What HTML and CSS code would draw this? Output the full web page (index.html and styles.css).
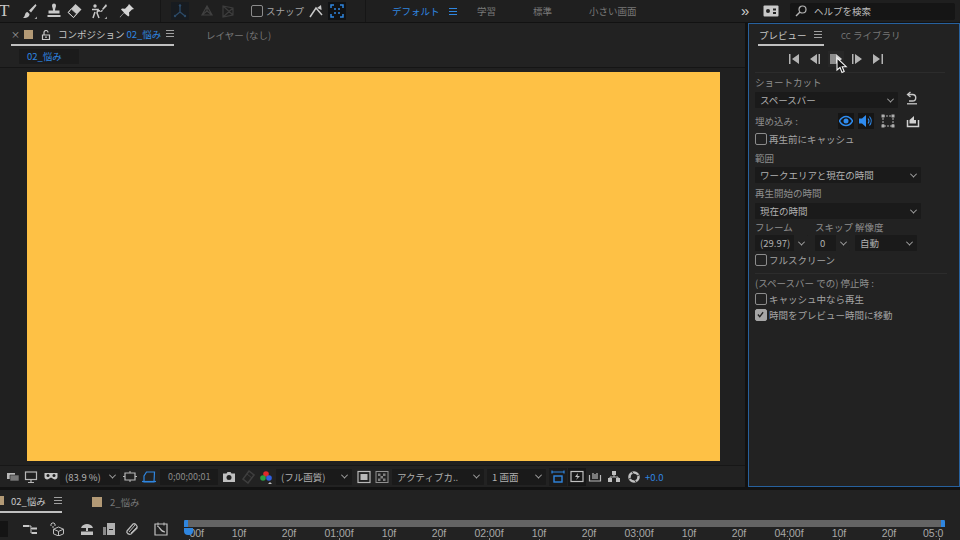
FILE: index.html
```html
<!DOCTYPE html>
<html lang="ja">
<head>
<meta charset="utf-8">
<title>After Effects プレビュー</title>
<link rel="stylesheet" href="styles.css">
</head>
<body>
<div class="app">
  <header class="toolbar">
    <div class="tbgroup tools">
      <span class="t-glyph">T</span>
      <svg class="ic ml12" viewBox="0 0 16 16"><path d="M14.500 1 8 7.500 10 9.500 15.500 2.500zM2 15c3.500.3 6.500-1 6.500-4L6.500 9C3.500 9 4.500 13.500 2 15z" fill="#c8c8c8"/><path d="M16 16h-2.500l2.500-2.500z" fill="#a0a0a0"/></svg>
      <svg class="ic ml9" viewBox="0 0 16 16"><path d="M6 2.500a2 2 0 1 1 4 0c0 2-1 2.500-1 5h4.500v3H2.500v-3H7c0-2.500-1-3-1-5zM1.500 12h13v2h-13z" fill="#c8c8c8"/></svg>
      <svg class="ic ml4" viewBox="0 0 16 16"><path d="M9.500 1 15.500 6.500 7.500 15 1.500 9.500z" fill="#c8c8c8"/><path d="m5.200 5.800 5.500 5L7.500 14.500 2.500 9.500z" fill="#222" stroke="#c8c8c8"/></svg>
      <svg class="ic ml9" viewBox="0 0 16 16"><circle cx="4" cy="3" r="1.700" fill="#c8c8c8"/><path d="M1 6.500h6L6 10l2 5M4 9l-2 6M6 7l3 1" fill="none" stroke="#c8c8c8" stroke-width="1.500"/><path d="m15 1-4 5 1 1 4-4zM11 7c-1 0-1.500 1-2 2 1 0 2.500 0 3-1.500z" fill="#c8c8c8"/><path d="M16 16h-2.500l2.500-2.500z" fill="#a0a0a0"/></svg>
      <svg class="ic ml12" viewBox="0 0 16 16"><path d="m10 1 5 5-2 .5-3 3 .3 3-1 1L5 10l-4 4.500L.8 14 5 9.500 2 6.500l1-1 3 .3 3-3z" fill="#d4d4d4"/></svg>
    </div>
    <div class="tbgroup axes">
      <span class="axis-box"><svg class="ic" viewBox="0 0 16 16"><path d="M8 2v7l-5 4M8 9l5 4" fill="none" stroke="#2c4a68" stroke-width="1.300"/><circle cx="8" cy="2.500" r="1.200" fill="#2c4a68"/><circle cx="3" cy="13" r="1.200" fill="#2c4a68"/><circle cx="13" cy="13" r="1.200" fill="#2c4a68"/></svg></span>
      <svg class="ic ml10" viewBox="0 0 16 16"><path d="M8 3 3 12h10zM8 3v5l-5 4M8 8l5 4" fill="none" stroke="#404040" stroke-width="1.200"/></svg>
      <svg class="ic ml5" viewBox="0 0 16 16"><path d="M3 3 13 5v7L3 14zM3 3l10 9M13 5 3 14" fill="none" stroke="#3c3c3c" stroke-width="1.200"/></svg>
      <span class="cb cb-top"></span><span class="label snap">スナップ</span>
      <svg class="ic ml4" viewBox="0 0 16 16"><path d="m2 14 6-9 6 7" fill="none" stroke="#c8c8c8" stroke-width="1.500"/><path d="m9 5 4-3 .6 5z" fill="#c8c8c8"/></svg>
      <span class="snap-box"><svg class="ic" viewBox="0 0 16 16"><path d="M2 5V2h3M11 2h3v3M14 11v3h-3M5 14H2v-3" fill="none" stroke="#2f86e0" stroke-width="1.500"/><circle cx="6" cy="6" r="1" fill="#2f86e0"/><circle cx="10" cy="6" r="1" fill="#2f86e0"/><circle cx="6" cy="10" r="1" fill="#2f86e0"/><circle cx="10" cy="10" r="1" fill="#2f86e0"/></svg></span>
    </div>
    <nav class="workspaces">
      <span class="blue ws-default">デフォルト</span>
      <span class="menu blue-menu"></span>
      <span class="dim ws-a">学習</span>
      <span class="dim ws-b">標準</span>
      <span class="dim ws-c">小さい画面</span>
      <span class="more">»</span>
      <svg class="ws-icon" viewBox="0 0 16 12"><rect x=".5" y=".5" width="15" height="11" rx="1" fill="#c8c8c8"/><circle cx="5" cy="6" r="2" fill="#222"/><path d="M10 3.500h3v2h-3zM10 7h3v2h-3z" fill="#222"/></svg>
      <div class="search">
        <svg class="search-ic" viewBox="0 0 12 12"><circle cx="7.500" cy="4.500" r="3.500" fill="none" stroke="#b4b4b4" stroke-width="1.200"/><path d="M5 7 1 11" stroke="#b4b4b4" stroke-width="1.400"/></svg>
        <span class="label bright">ヘルプを検索</span>
      </div>
    </nav>
  </header>

  <main class="work">
    <section class="comp">
      <div class="tabs">
        <span class="close">×</span>
        <span class="swatch"></span>
        <svg class="lock" viewBox="0 0 10 10"><path d="M1.500 5h7v4.500h-7z" fill="none" stroke="#c8c8c8" stroke-width="1.200"/><path d="M3 5V2.500a2 2 0 0 1 4 0" fill="none" stroke="#c8c8c8" stroke-width="1.200"/><rect x="4.300" y="6.400" width="1.400" height="1.600" fill="#c8c8c8"/></svg>
        <div class="tab tab-comp">
          <span class="strong">コンポジション</span>
          <span class="blue tab-name">02_悩み</span>
          <span class="menu"></span>
        </div>
        <span class="dim layer-tab">レイヤー (なし)</span>
      </div>
      <div class="subtabs"><span class="subtab blue">02_悩み</span></div>
      <div class="viewer"><div class="canvas"></div></div>
      <div class="viewer-bar">
        <svg class="vi ml6" viewBox="0 0 14 14"><path d="M1 3h8v6H1z" fill="#b8b8b8"/><path d="M4 5h9v6H4z" fill="#777" stroke="#222" stroke-width=".6"/></svg>
        <svg class="vi ml4" viewBox="0 0 14 14"><rect x="1.500" y="2" width="11" height="7.500" fill="none" stroke="#b8b8b8" stroke-width="1.200"/><path d="M7 10v2M4 12.500h6" stroke="#b8b8b8" stroke-width="1.200"/></svg>
        <svg class="vi ml6" viewBox="0 0 14 14"><path d="M.5 3h13v4c0 2-2.500 3-4 2L7 7.500 4.500 9c-1.500 1-4 0-4-2z" fill="#c8c8c8"/><circle cx="4" cy="5.500" r="1.500" fill="#222"/><circle cx="10" cy="5.500" r="1.500" fill="#222"/></svg>
        <span class="dd dd-zoom"><span class="dd-text">(83.9 %)</span><i class="chev"></i></span>
        <svg class="vi ml3" viewBox="0 0 14 14"><path d="M2 3h10v7H2z" fill="none" stroke="#b8b8b8" stroke-width="1.200"/><path d="M7 1v2M7 10v2M0 6.500h2M12 6.500h2" stroke="#b8b8b8"/></svg>
        <svg class="vi ml5" viewBox="0 0 14 14"><path d="M2 12V6L4.500 2h8L12 12z" fill="none" stroke="#2f86e0" stroke-width="1.200"/><path d="M0 11.500h14" stroke="#2f86e0" stroke-width="1.200"/></svg>
        <span class="timecode">0;00;00;01</span>
        <svg class="vi ml4" viewBox="0 0 14 14"><path d="M1 3.500h3.500l1-1.500h3l1 1.500H13v8.500H1z" fill="#c0c0c0"/><circle cx="7" cy="7.500" r="2.500" fill="#222"/></svg>
        <svg class="vi ml5" viewBox="0 0 14 14"><path d="m8 1 5 4-6 8-5-4z" fill="none" stroke="#3e3e3e" stroke-width="1.500"/><path d="M6 4 11 8" stroke="#3e3e3e"/></svg>
        <svg class="vi ml4" viewBox="0 0 14 14"><circle cx="7" cy="4" r="2.800" fill="#e02a2a"/><circle cx="4" cy="8" r="2.800" fill="#2aa040"/><circle cx="10" cy="8" r="2.800" fill="#2f5fe0"/><path d="M13 14H9l2-2z" fill="#c0c0c0"/></svg>
        <span class="dd dd-quality"><span class="dd-text">(フル画質)</span><i class="chev"></i></span>
        <svg class="vi ml5" viewBox="0 0 14 14"><rect x="1" y="1.500" width="12" height="11" fill="none" stroke="#b8b8b8" stroke-width="1.200"/><rect x="3.500" y="4" width="7" height="6" fill="#b8b8b8"/></svg>
        <svg class="vi ml4" viewBox="0 0 14 14"><rect x="1" y="1.500" width="12" height="11" fill="none" stroke="#909090"/><path d="M3 3.500h2.500v2.500H3zM8 3.500h2.500v2.500H8zM5.500 6h2.500v2.500H5.500zM3 8.500h2.500V11H3zM8 8.500h2.500V11H8z" fill="#808080"/></svg>
        <span class="dd dd-camera"><span class="dd-text">アクティブカ..</span><i class="chev"></i></span>
        <span class="dd dd-view"><span class="dd-text">1 画面</span><i class="chev"></i></span>
        <span class="vi-box ml3"><svg class="vi" viewBox="0 0 14 14"><path d="M1 2h12M1 .5v3M13 .5v3" stroke="#2f86e0" stroke-width="1.200"/><rect x="3" y="6" width="8" height="6" fill="none" stroke="#2f86e0" stroke-width="1.400"/></svg></span>
        <span class="vi-box dark"><svg class="vi" viewBox="0 0 14 14"><rect x="1" y="1.500" width="12" height="10" fill="none" stroke="#c0c0c0" stroke-width="1.200"/><path d="M8 3 5 7h2.500L6 10l4-4H7.500z" fill="#c0c0c0"/></svg></span>
        <svg class="vi ml2" viewBox="0 0 14 14"><path d="M1.500 5v6h11V5M5 3v6M7 4v5M9 3v6" fill="none" stroke="#b8b8b8" stroke-width="1.200"/></svg>
        <svg class="vi ml5" viewBox="0 0 14 14"><path d="M5 1h4v4H5zM1 8h4v4H1zM9 8h4v4H9z" fill="#c0c0c0"/><path d="M7 5v2M3 8V7h8v1" fill="none" stroke="#c0c0c0"/></svg>
        <svg class="vi ml6" viewBox="0 0 14 14"><circle cx="7" cy="7" r="4.500" fill="none" stroke="#c0c0c0" stroke-width="2.600"/><path d="m5 2 3 4M12 5 8 7M9 12 6 8M2 9l4-2" stroke="#222" stroke-width=".9"/></svg>
        <span class="blue exposure">+0.0</span>
      </div>
    </section>

    <aside class="preview">
      <div class="ptabs">
        <div class="tab tab-preview"><span class="strong">プレビュー</span><span class="menu"></span></div>
        <span class="dim cc-tab"><span class="cc">CC</span> ライブラリ</span>
      </div>
      <div class="transport">
        <svg class="tp" viewBox="0 0 12 10"><path d="M1 0h1.500v10H1zM11 0v10L4 5z" fill="#b4b4b4"/></svg>
        <svg class="tp" viewBox="0 0 12 10"><path d="M8 0v10L1 5zM9.500 0H11v10H9.500z" fill="#b4b4b4"/></svg>
        <span class="play"><svg class="tp" viewBox="0 0 12 10"><path d="M0 0h6v10H0z" fill="#8d8d8d"/><path d="M6 0v10l6-5z" fill="#d4d4d4"/></svg></span>
        <svg class="tp" viewBox="0 0 12 10"><path d="M1 0h1.500v10H1zM4 0v10l7-5z" fill="#b4b4b4"/></svg>
        <svg class="tp" viewBox="0 0 12 10"><path d="M1 0v10l7-5zM9.500 0H11v10H9.500z" fill="#b4b4b4"/></svg>
        <svg class="cursor" viewBox="0 0 12 17"><path d="M1 1v12l3-2.500 2 5 2.200-1-2-4.800h4z" fill="#111" stroke="#f2f2f2" stroke-width="1.100"/></svg>
      </div>
      <div class="rule"></div>
      <div class="field-label l-short">ショートカット</div>
      <div class="row">
        <span class="dd dd-key"><span class="dd-text">スペースバー</span><i class="chev"></i></span>
        <svg class="side-ic" viewBox="0 0 14 14"><path d="M5.500 1 2.500 3.500 5.500 6" fill="none" stroke="#c8c8c8" stroke-width="1.300"/><path d="M3 3.500H7.500a3.200 3.200 0 0 1 0 6.500H4" fill="none" stroke="#c8c8c8" stroke-width="1.400"/><path d="M2 12.800h10" stroke="#c8c8c8" stroke-width="1.300"/></svg>
      </div>
      <div class="row embed">
        <span class="label embed-label">埋め込み :</span>
        <span class="toggle"><svg class="em" viewBox="0 0 14 14"><path d="M.5 7C2.500 3.500 5 2.500 7 2.500s4.500 1 6.500 4.500c-2 3.500-4.500 4.500-6.500 4.500S2.500 10.500.5 7z" fill="none" stroke="#2f8cf0" stroke-width="1.500"/><circle cx="7" cy="7" r="2.500" fill="#2f8cf0"/></svg></span>
        <span class="toggle"><svg class="em" viewBox="0 0 14 14"><path d="M0 4.500h3L7 1v12L3 9.500H0z" fill="#2f8cf0"/><path d="M9 4.500a4 4 0 0 1 0 5M10.500 2.500a7 7 0 0 1 0 9" fill="none" stroke="#2f8cf0" stroke-width="1.100"/></svg></span>
        <svg class="em ml3" viewBox="0 0 14 14"><rect x="2" y="2" width="10" height="10" fill="none" stroke="#b0b0b0" stroke-dasharray="2 1"/><path d="M.5.500h3v3h-3zM10.500.500h3v3h-3zM.5 10.500h3v3h-3zM10.500 10.500h3v3h-3z" fill="#b0b0b0"/></svg>
        <svg class="side-ic export" viewBox="0 0 14 14"><path d="M1.500 6v6.500h11V6" fill="none" stroke="#d0d0d0" stroke-width="1.500"/><path d="M3.500 9.500H10V6H8V2L3.500 6z" fill="#d0d0d0"/></svg>
      </div>
      <label class="check c-first"><span class="cb"></span><span class="label">再生前にキャッシュ</span></label>
      <div class="field-label l-range">範囲</div>
      <span class="dd dd-full dd-range"><span class="dd-text">ワークエリアと現在の時間</span><i class="chev"></i></span>
      <div class="field-label l-start">再生開始の時間</div>
      <span class="dd dd-full dd-start"><span class="dd-text">現在の時間</span><i class="chev"></i></span>
      <div class="tri-labels">
        <span class="field-label">フレーム</span>
        <span class="field-label">スキップ</span>
        <span class="field-label">解像度</span>
      </div>
      <div class="tri-fields">
        <span class="dd dd-split"><span class="dd-text">(29.97)</span><span class="dd-btn"><i class="chev"></i></span></span>
        <span class="dd dd-split dd-skip"><span class="dd-text">0</span><span class="dd-btn"><i class="chev"></i></span></span>
        <span class="dd dd-res"><span class="dd-text">自動</span><i class="chev"></i></span>
      </div>
      <label class="check c-full"><span class="cb"></span><span class="label">フルスクリーン</span></label>
      <div class="rule rule-2"></div>
      <div class="field-label l-stop">(スペースバー での) 停止時 :</div>
      <label class="check c-cache"><span class="cb"></span><span class="label">キャッシュ中なら再生</span></label>
      <label class="check c-move"><span class="cb on"><svg viewBox="0 0 12 12"><path d="m2.500 6 2.500 3 4.500-6" fill="none" stroke="#222" stroke-width="1.700"/></svg></span><span class="label">時間をプレビュー時間に移動</span></label>
    </aside>
  </main>

  <section class="timeline">
    <div class="tl-tabs">
      <div class="tab tab-tl"><span class="swatch edge"></span><span class="strong tl-name">02_悩み</span><span class="menu"></span></div>
      <span class="swatch tl-swatch"></span>
      <span class="dim tl-other">2_悩み</span>
    </div>
    <div class="tl-row">
      <span class="search-stub"></span>
      <svg class="tl-ic ml15" viewBox="0 0 14 14"><path d="M0 3h6v2H0zM9 5.500h5v2H9zM9 10h5v2H9z" fill="#c8c8c8"/><path d="M6 4h2v7h1M8 6.500h1" fill="none" stroke="#c8c8c8"/></svg>
      <svg class="tl-ic ml13" viewBox="0 0 14 14"><path d="m8.500 5 5 2.200v4.600l-5 2.200-5-2.200V7.200z" fill="none" stroke="#c0c0c0"/><path d="m3.500 7.200 5 2.200 5-2.200M8.500 9.400V14" fill="none" stroke="#c0c0c0"/><path d="M3 0v2M0 3h2M4 3h2M3 4v2M1 1l1 1M5 1 4 2" stroke="#c0c0c0"/></svg>
      <svg class="tl-ic ml16" viewBox="0 0 14 14"><path d="M1 6c1-3 3.500-4 6-4s5 1 6 4z" fill="#c0c0c0"/><path d="M6 6h2v3H6zM1 9.500h12V13H1z" fill="#c0c0c0"/></svg>
      <svg class="tl-ic ml8" viewBox="0 0 14 14"><path d="M1 5h3v8H1z" fill="#8a8a8a"/><path d="M5 1h8v12H5z" fill="#b0b0b0"/><path d="M7 7h4v1H7z" fill="#222"/></svg>
      <svg class="tl-ic ml9" viewBox="0 0 14 14"><path d="M2 9 8 2c2-1 5 2 4 4l-6 6c-2 1-5-1-4-3z" fill="none" stroke="#b8b8b8" stroke-width="1.300"/><path d="m4 10 6-7M6 11l6-6" stroke="#b8b8b8"/></svg>
      <svg class="tl-ic ml15" viewBox="0 0 14 14"><path d="M1 2h12v11H1z" fill="none" stroke="#c0c0c0" stroke-width="1.200"/><path d="M3 4c3 0 3 6 8 6" fill="none" stroke="#c0c0c0" stroke-width="1.200"/><path d="M4 .5v3M10 .5v3" stroke="#c0c0c0"/></svg>
      <div class="ruler">
        <div class="range"></div>
        <div class="ticks">
          <span class="tick-first">00f</span><span>10f</span><span>20f</span><span class="major">01:00f</span><span>10f</span><span>20f</span><span class="major">02:00f</span><span>10f</span><span>20f</span><span class="major">03:00f</span><span>10f</span><span>20f</span><span class="major">04:00f</span><span>10f</span><span>20f</span><span class="tick-last major">05:0</span>
        </div>
        <i class="playhead"></i>
      </div>
    </div>
  </section>
</div>
</body>
</html>
```
FILE: styles.css
```css
* { box-sizing: border-box; }
html, body { margin: 0; height: 100%; }
body {
  background: #121212;
  color: #a9a9a9;
  font: 9.5px/12px "Noto Sans CJK JP", "Liberation Sans", sans-serif;
  overflow: hidden;
}
.app { width: 960px; height: 540px; display: flex; flex-direction: column; overflow: hidden; }
svg { display: block; flex: none; }
i { display: block; }

.ml2 { margin-left: 2px; } .ml3 { margin-left: 3px; } .ml4 { margin-left: 4px; } .ml5 { margin-left: 5px; }
.ml6 { margin-left: 6px; } .ml8 { margin-left: 8px; } .ml9 { margin-left: 9px; } .ml10 { margin-left: 10px; } .ml12 { margin-left: 12px; }
.ml13 { margin-left: 13px; } .ml15 { margin-left: 15px; } .ml16 { margin-left: 16px; }

.blue { color: #2f86e0; }
.dim { color: #787878; }
.strong { color: #c6c6c6; }
.label { color: #a4a4a4; white-space: nowrap; }
.bright { color: #bcbcbc; }

/* top toolbar */
.toolbar { flex: none; height: 22px; background: #1f1f1f; display: flex; align-items: center; margin-bottom: 1px; }
.tbgroup { display: flex; align-items: center; height: 22px; }
.ic { width: 16px; height: 16px; }
.tools { width: 161px; border-right: 1px solid #161616; }
.t-glyph { width: 10px; font: 17px/20px "Liberation Serif", serif; color: #c8c8c8; margin-left: -1px; }
.axes { width: 205px; padding-left: 10px; border-right: 1px solid #161616; }
.axis-box { width: 18px; height: 18px; background: #171b20; display: flex; align-items: center; justify-content: center; }
.cb { width: 12px; height: 12px; flex: none; border: 1.500px solid #8c8c8c; border-radius: 2px; display: block; }
.cb-top { margin-left: 15px; }
.cb.on { background: #a6a6a6; border-color: #a6a6a6; }
.snap { margin-left: 3px; }
.snap-box { width: 18px; height: 18px; margin-left: 4px; background: #101214; display: flex; align-items: center; justify-content: center; }
.workspaces { flex: 1; display: flex; align-items: center; height: 22px; padding-left: 26px; font-size: 9.5px; }
.ws-default { width: 48px; white-space: nowrap; }
.menu { display: block; flex: none; width: 8px; height: 7px; border-top: 1px solid #a0a0a0; border-bottom: 1px solid #a0a0a0; position: relative; }
.menu::after { content: ""; position: absolute; left: 0; right: 0; top: 2px; height: 1px; background: #a0a0a0; }
.blue-menu { border-color: #2f86e0; margin-left: 9px; }
.blue-menu::after { background: #2f86e0; }
.ws-a { margin-left: 20px; width: 56px; }
.ws-b { width: 56px; }
.ws-c { width: 48px; white-space: nowrap; }
.more { margin-left: 104px; color: #d0d0d0; font: 15px/18px "Liberation Sans", sans-serif; width: 22px; }
.ws-icon { width: 16px; height: 12px; margin-left: 0; }
.search { width: 165px; height: 17px; margin-left: 11px; background: #151515; border-radius: 2px; display: flex; align-items: center; padding-left: 5px; }
.search-ic { width: 12px; height: 12px; margin-right: 7px; }

/* work area */
.work { flex: none; height: 464px; display: flex; gap: 3px; }
.comp { width: 745px; background: #222; display: flex; flex-direction: column; }
.tabs { flex: none; height: 23px; display: flex; align-items: center; padding-left: 11px; }
.close { width: 13px; color: #a8a8a8; font-size: 9px; }
.swatch { display: block; flex: none; width: 9px; height: 9px; background: #b39a76; }
.lock { width: 10px; height: 10px; margin-left: 8px; }
.tab { display: flex; align-items: center; height: 23px; border-bottom: 2px solid #c0c0c0; white-space: nowrap; position: relative; }
.tab-comp { margin-left: -40px; padding-left: 47px; width: 163px; }
.tab-name { margin-left: 2px; }
.tab-comp .menu { margin-left: 5px; }
.layer-tab { margin-left: 32px; }
.subtabs { flex: none; height: 22px; padding: 3px 0 0 19px; border-bottom: 1px solid #151515; }
.subtab { display: block; width: 60px; height: 15px; line-height: 15px; padding-left: 8px; background: #1b1b1b; }
.viewer { flex: 1; min-height: 0; background: #202020; padding: 4px 25px 4px 27px; border-bottom: 1px solid #171717; }
.canvas { height: 100%; background: #fec145; }
.viewer-bar { flex: none; height: 21px; display: flex; align-items: center; }
.vi { width: 14px; height: 14px; }
.dd { display: flex; align-items: center; justify-content: space-between; height: 16px; background: #1a1a1a; border-radius: 1px; padding: 0 4px 0 5px; color: #b0b0b0; white-space: nowrap; flex: none; }
.chev { width: 5px; height: 5px; border-right: 1px solid #a8a8a8; border-bottom: 1px solid #a8a8a8; transform: rotate(45deg) translate(-1px,-1px); flex: none; margin-right: 1px; }
.dd-zoom { width: 60px; margin-left: 2px; }
.timecode { width: 58px; height: 16px; margin-left: 4px; background: #1a1a1a; font-size: 9px; line-height: 16px; padding-left: 8px; color: #8a8a8a; }
.dd-quality { width: 76px; margin-left: 3px; }
.dd-camera { width: 92px; margin-left: 3px; }
.dd-view { width: 59px; margin-left: 3px; }
.vi-box { width: 18px; height: 18px; display: flex; align-items: center; justify-content: center; background: #1b1b1b; }
.vi-box.dark { background: #171717; margin-left: 1px; }
.exposure { margin-left: 4px; }

/* preview panel */
.preview { width: 212px; background: #222; border: 1px solid #27619e; padding: 0 0 0 6px; display: flex; flex-direction: column; align-items: flex-start; }
.ptabs { height: 22px; display: flex; align-items: center; margin-left: 3px; flex: none; }
.tab-preview { width: 66px; padding-top: 1px; padding-left: 1px; gap: 7px; height: 22px; }
.cc-tab { margin-left: 17px; }
.cc { font-size: 8px; }
.transport { flex: none; height: 26px; width: 100%; display: flex; align-items: center; margin-left: 33px; gap: 9px; position: relative; }
.tp { width: 12px; height: 10px; }
.play { width: 16px; height: 16px; background: #272727; display: flex; align-items: center; justify-content: center; margin: 0 -2px; }
.cursor { position: absolute; left: 48px; top: 11px; width: 12px; height: 17px; }
.rule { height: 1px; width: 190px; background: #2c2c2c; flex: none; }
.rule-2 { width: 192px; margin-top: 6px; }
.field-label { color: #8e8e8e; white-space: nowrap; }
.l-short { margin-top: 3px; }
.row { display: flex; align-items: center; flex: none; }
.dd-key { width: 143px; margin-top: 4px; }
.side-ic { width: 14px; height: 14px; margin-left: 7px; }
.embed { height: 16px; margin-top: 5px; width: 170px; }
.embed-label { width: 83px; color: #8e8e8e; }
.toggle { width: 16px; height: 16px; margin-right: 4px; background: #151515; display: flex; align-items: center; justify-content: center; }
.em { width: 14px; height: 14px; }
.export { margin-left: 11px; }
.check { display: flex; align-items: center; gap: 2px; height: 14px; flex: none; }
.c-first { margin-top: 3px; }
.l-range { margin-top: 6px; }
.dd-full { width: 166px; }
.dd-range { margin-top: 3px; }
.dd-start { margin-top: 4px; }
.l-start { margin-top: 4px; }
.tri-labels { display: grid; grid-template-columns: 60px 40px 1fr; width: 166px; margin-top: 2px; flex: none; }
.tri-fields { display: flex; margin-top: 2px; flex: none; }
.dd-split { width: 53px; padding: 0; overflow: hidden; }
.dd-split .dd-text { padding-left: 5px; }
.dd-btn { width: 14px; height: 16px; background: #222; border-left: 1px solid #222; margin-left: auto; display: flex; align-items: center; justify-content: center; }
.dd-skip { width: 35px; margin-left: 7px; }
.dd-res { width: 62px; margin-left: 5px; }
.c-full { margin-top: 2px; }
.l-stop { margin-top: 3px; }
.c-cache { margin-top: 3px; }
.c-move { margin-top: 2px; }
.on svg { width: 9px; height: 9px; }

/* timeline */
.timeline { flex: 1; margin-top: 3px; background: #222; min-height: 0; }
.tl-tabs { height: 23px; display: flex; align-items: center; }
.tab-tl { width: 62px; gap: 0; padding-right: 0; }
.swatch.edge { width: 4px; }
.tl-name { margin-left: 7px; }
.tab-tl .menu { margin-left: 8px; }
.tl-swatch { margin-left: 30px; width: 10px; height: 10px; }
.tl-other { margin-left: 8px; }
.tl-row { display: flex; align-items: flex-start; height: 27px; padding-top: 7px; }
.search-stub { width: 8px; height: 16px; margin-top: 1px; background: #141414; flex: none; }
.tl-ic { width: 14px; height: 14px; margin-top: 2px; }
.ruler { margin-left: 16px; width: 761px; position: relative; overflow: hidden; height: 20px; flex: none; }
.range { height: 8px; margin-top: -1px; background: #646464; border-left: 4px solid #2f86e0; border-right: 4px solid #2f86e0; border-radius: 3px 3px 0 0; }
.ticks { display: flex; margin-left: -20px; color: #a8a8a8; font: 10.500px/13px "Liberation Sans", sans-serif; }
.ticks span { flex: none; width: 50px; text-align: center; position: relative; }
.ticks span::after { content: ""; position: absolute; left: 25px; bottom: 0; width: 1px; height: 1px; background: #8a8a8a; }
.ticks .major::after { height: 2px; }
.ticks .tick-first { text-align: right; padding-right: 10px; }
.ticks .tick-last { text-align: left; padding-left: 9px; }
.playhead { position: absolute; left: 0; top: 8px; width: 9px; height: 7px; background: #2f86e0; border-radius: 0 0 4px 4px; }
```
